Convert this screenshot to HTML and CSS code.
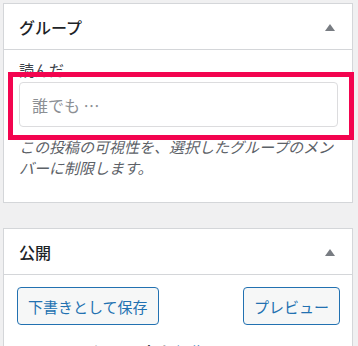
FILE: index.html
```html
<!DOCTYPE html>
<html lang="ja">
<head>
<meta charset="utf-8">
<link rel="stylesheet" href="styles.css">
</head>
<body>
<div class="page">
  <section class="postbox">
    <div class="postbox-header">
      <h2 class="postbox-title">グループ</h2>
      <span class="toggle"></span>
    </div>
    <div class="postbox-body group-body">
      <label class="field-label" for="who">読んだ</label>
      <input id="who" class="field-input" type="text" placeholder="誰でも …">
      <p class="description">この投稿の可視性を、選択したグループのメンバーに制限します。</p>
    </div>
    <div class="highlight"></div>
  </section>

  <section class="postbox">
    <div class="postbox-header">
      <h2 class="postbox-title">公開</h2>
      <span class="toggle"></span>
    </div>
    <div class="postbox-body publish-body">
      <div class="actions">
        <button class="btn">下書きとして保存</button>
        <button class="btn">プレビュー</button>
      </div>
      <div class="misc-row">
        <svg class="misc-icon" viewBox="0 0 20 20" width="12" height="12"><circle cx="10" cy="7" r="5" fill="#8c8f94"/><path d="M3 19c0-4 3-7 7-7s7 3 7 7z" fill="#8c8f94"/></svg>
        <span>ステータス: <b>下書き</b> <a class="edit">編集</a></span>
      </div>
    </div>
  </section>
</div>
</body>
</html>
```

FILE: styles.css
```css
html, body {
  margin: 0;
  padding: 0;
  background: #f0f0f1;
  font-family: "Noto Sans CJK JP", "Noto Sans", sans-serif;
  color: #3c434a;
}
.page {
  padding: 3px 0 0 3px;
  width: 350px;
}
.postbox {
  position: relative;
  background: #fff;
  border: 1px solid #d4d6d9;
  margin-bottom: 25px;
}
.postbox-header {
  height: 45px;
  border-bottom: 1px solid #d4d6d9;
  display: flex;
  align-items: center;
  justify-content: space-between;
  padding: 0 17px 0 15px;
}
.postbox-title {
  margin: 0;
  font-size: 16px;
  font-weight: 500;
  color: #1d2327;
  line-height: 1;
}
.toggle {
  width: 0;
  height: 0;
  border-left: 5px solid transparent;
  border-right: 5px solid transparent;
  border-bottom: 7px solid #787c82;
  margin-top: 1px;
}
.group-body {
  padding: 9px 14px 24px 15px;
}
.field-label {
  display: block;
  font-size: 15px;
  line-height: 21px;
  color: #3c434a;
  margin-bottom: 2px;
}
.field-input {
  display: block;
  box-sizing: border-box;
  width: 319px;
  height: 45px;
  border: 1px solid #dcdcde;
  border-radius: 4px;
  padding: 0 12px;
  font-family: inherit;
  font-size: 16px;
  color: #2c3338;
  background: #fff;
}
.field-input::placeholder {
  color: #8c8f94;
}
.description {
  margin: 9px 0 0;
  font-size: 15px;
  line-height: 21px;
  font-style: italic;
  color: #5c6167;
}
.highlight {
  position: absolute;
  left: 4px;
  top: 68px;
  width: 336px;
  height: 58px;
  border: 5px solid #f3044f;
  pointer-events: none;
}
.publish-body {
  padding: 12px 12px 10px 13px;
}
.actions {
  display: flex;
  justify-content: space-between;
}
.btn {
  height: 38px;
  box-sizing: border-box;
  border: 1px solid #2271b1;
  border-radius: 4px;
  background: #f6f7f7;
  color: #2271b1;
  font-family: inherit;
  font-size: 15px;
  padding: 0 10px;
  line-height: 1;
}
.misc-row {
  display: flex;
  align-items: center;
  gap: 8px;
  margin-top: 16px;
  padding-left: 7px;
  font-size: 15px;
  line-height: 21px;
  color: #3c434a;
}
.misc-row b { font-weight: 600; }
.edit { color: #2271b1; text-decoration: underline; }
```
